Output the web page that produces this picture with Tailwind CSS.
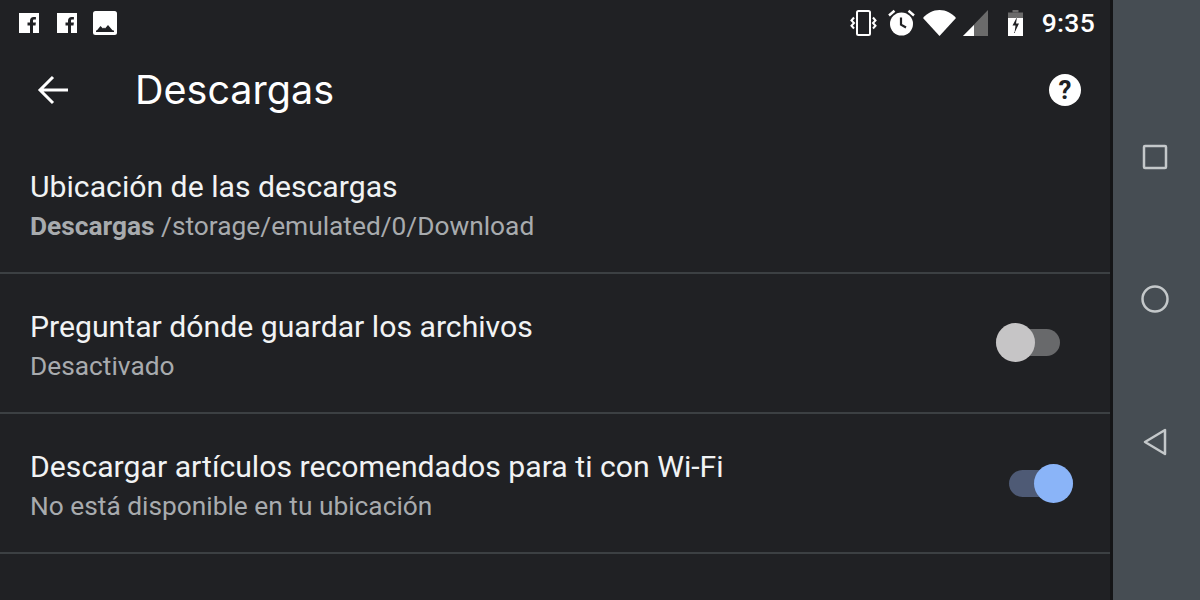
<!DOCTYPE html>
<html lang="es">
<head>
<meta charset="UTF-8" />
<title>Descargas</title>
<script src="https://cdn.jsdelivr.net/npm/@tailwindcss/browser@4"></script>
</head>
<body class="bg-[#202124] font-['Roboto',sans-serif] overflow-hidden">
<div class="flex w-[1200px] h-[600px] overflow-hidden">
  <!-- main screen -->
  <div class="w-[1110px] h-full bg-[#202124] flex flex-col">
    <!-- status bar -->
    <div class="h-[44px] flex items-center justify-between pl-[19px] pr-[15px] pt-[1px] text-white">
      <div class="flex items-center">
        <svg width="20" height="20" viewBox="0 0 20 20"><path fill="#fff" d="M0 0h20v20h-6v-7.500h2.500l.4-3H14V8c0-.9.3-1.400 1.300-1.400h1.600V4c-.4 0-1.200-.1-2.200-.1-2.300 0-3.700 1.400-3.700 3.800v1.800H8.500v3H11V20H0z"/></svg>
        <svg class="ml-[18px]" width="20" height="20" viewBox="0 0 20 20"><path fill="#fff" d="M0 0h20v20h-6v-7.500h2.500l.4-3H14V8c0-.9.3-1.400 1.300-1.400h1.600V4c-.4 0-1.200-.1-2.200-.1-2.300 0-3.700 1.400-3.700 3.800v1.800H8.500v3H11V20H0z"/></svg>
        <svg class="ml-[16px]" width="24" height="24" viewBox="0 0 24 24"><rect width="24" height="24" rx="2.500" fill="#fff"/><path fill="#202124" d="M3 20.500 7.500 15l2.500 2.500 1-1 1 1 3-3.500 5.500 6.500z"/><rect x="3" y="19.500" width="18" height="1.500" fill="#202124"/></svg>
      </div>
      <div class="flex items-center">
        <svg width="29" height="26" viewBox="0 0 29 26" fill="none" stroke="#fff" stroke-width="2"><rect x="8" y="1" width="13" height="24" rx="1.500"/><path d="M5 7.500 2.500 10.500l2.500 2.500-2.500 2.800L5 18.500M24 7.500l2.500 3-2.500 2.500 2.500 2.800-2.500 2.700" stroke-width="2"/></svg>
        <svg class="ml-[10px]" width="27" height="27" viewBox="0 0 27 27"><circle cx="13.500" cy="15" r="11.500" fill="#fff"/><path fill="none" stroke="#fff" stroke-width="2.500" d="M1 6.500 6.500 1.800M26 6.500 20.500 1.800"/><path fill="none" stroke="#202124" stroke-width="2.200" d="M13 8.500v7.200l5 2.800"/></svg>
        <svg class="ml-[8px]" width="33" height="26" viewBox="0 0 33 26"><path fill="#fff" d="M16.500 26 0 8C4 3.500 10 0 16.500 0S29 3.500 33 8z"/></svg>
        <svg class="ml-[7px]" width="25" height="26" viewBox="0 0 25 26"><path fill="#6b6b6b" d="M25 0v26H0z"/><path fill="#fff" d="M11 15v11H0z"/></svg>
        <svg class="ml-[20px]" width="15" height="26" viewBox="0 0 15 26"><path fill="#6b6b6b" d="M4.500 0h6v2.500h-6z"/><path fill="#6b6b6b" d="M0 2.500h15V8H0z"/><path fill="#fff" fill-rule="evenodd" d="M0 8h15v18H0zM9 7 4.500 15.500h3L6.500 23 11 13.500H8z"/></svg>
        <span class="ml-[19px] mt-[2px] text-[26.500px] leading-none font-medium tracking-[0.3px]">9:35</span>
      </div>
    </div>
    <!-- toolbar -->
    <div class="h-[90px] flex items-center pt-[2px] text-white">
      <svg class="ml-[37px]" width="32" height="32" viewBox="0 0 32 32" fill="none" stroke="#fff" stroke-width="3"><path d="M31 16H3M16 3 3 16l13 13"/></svg>
      <h1 class="ml-[66px] mt-[2px] font-['Inter',sans-serif] text-[39.500px] leading-none font-normal">Descargas</h1>
      <svg class="ml-auto mr-[29px]" width="32" height="32" viewBox="0 0 32 32"><circle cx="16" cy="16" r="16" fill="#fff"/><text x="16" y="25" text-anchor="middle" font-family="Roboto" font-weight="700" font-size="26" fill="#202124">?</text></svg>
    </div>
    <!-- rows -->
    <div class="h-[140px] pl-[30px] flex flex-col pt-[35px] border-b-2 border-[#3c4043]">
      <div class="text-[30.200px] leading-[36px] text-[#f1f3f4]">Ubicación de las descargas</div>
      <div class="text-[26.300px] leading-[32px] mt-[5px] text-[#a8abae]"><span class="font-bold">Descargas</span> /storage/emulated/0/Download</div>
    </div>
    <div class="h-[140px] pl-[30px] pr-[50px] flex justify-between border-b-2 border-[#3c4043]">
      <div class="pt-[35px]">
        <div class="text-[30.200px] leading-[36px] text-[#f1f3f4]">Preguntar dónde guardar los archivos</div>
        <div class="text-[26.300px] leading-[32px] mt-[5px] text-[#a8abae]">Desactivado</div>
      </div>
      <div class="relative w-[64px] h-[27px] mt-[55px] rounded-full bg-[#68696b]">
        <div class="absolute left-0 top-[-6px] w-[39px] h-[39px] rounded-full bg-[#c6c5c6]"></div>
      </div>
    </div>
    <div class="h-[140px] pl-[30px] pr-[37px] flex justify-between border-b-2 border-[#3c4043]">
      <div class="pt-[35px]">
        <div class="text-[30.200px] leading-[36px] text-[#f1f3f4]">Descargar artículos recomendados para ti con Wi-Fi</div>
        <div class="text-[26.300px] leading-[32px] mt-[5px] text-[#a8abae]">No está disponible en tu ubicación</div>
      </div>
      <div class="relative w-[64px] h-[27px] mt-[56px] rounded-full bg-[#4e5a75]">
        <div class="absolute right-0 top-[-6px] w-[39px] h-[39px] rounded-full bg-[#8ab4f8]"></div>
      </div>
    </div>
  </div>
  <!-- navigation bar -->
  <div class="w-[3px] h-full bg-[#141517]"></div>
  <div class="flex-1 h-full bg-[#464d53] relative">
    <svg class="absolute left-[29px] top-[144px]" width="26" height="26" viewBox="0 0 26 26" fill="none" stroke="#c4c8ca" stroke-width="2.500"><rect x="2" y="2" width="22" height="22" rx="1"/></svg>
    <svg class="absolute left-[28px] top-[285px]" width="28" height="28" viewBox="0 0 28 28" fill="none" stroke="#c4c8ca" stroke-width="2.500"><circle cx="14" cy="14" r="12.500"/></svg>
    <svg class="absolute left-[29px] top-[427px]" width="26" height="30" viewBox="0 0 26 30" fill="none" stroke="#c4c8ca" stroke-width="2.500" stroke-linejoin="round"><path d="M23 3v24L3 15z"/></svg>
  </div>
</div>
</body>
</html>
